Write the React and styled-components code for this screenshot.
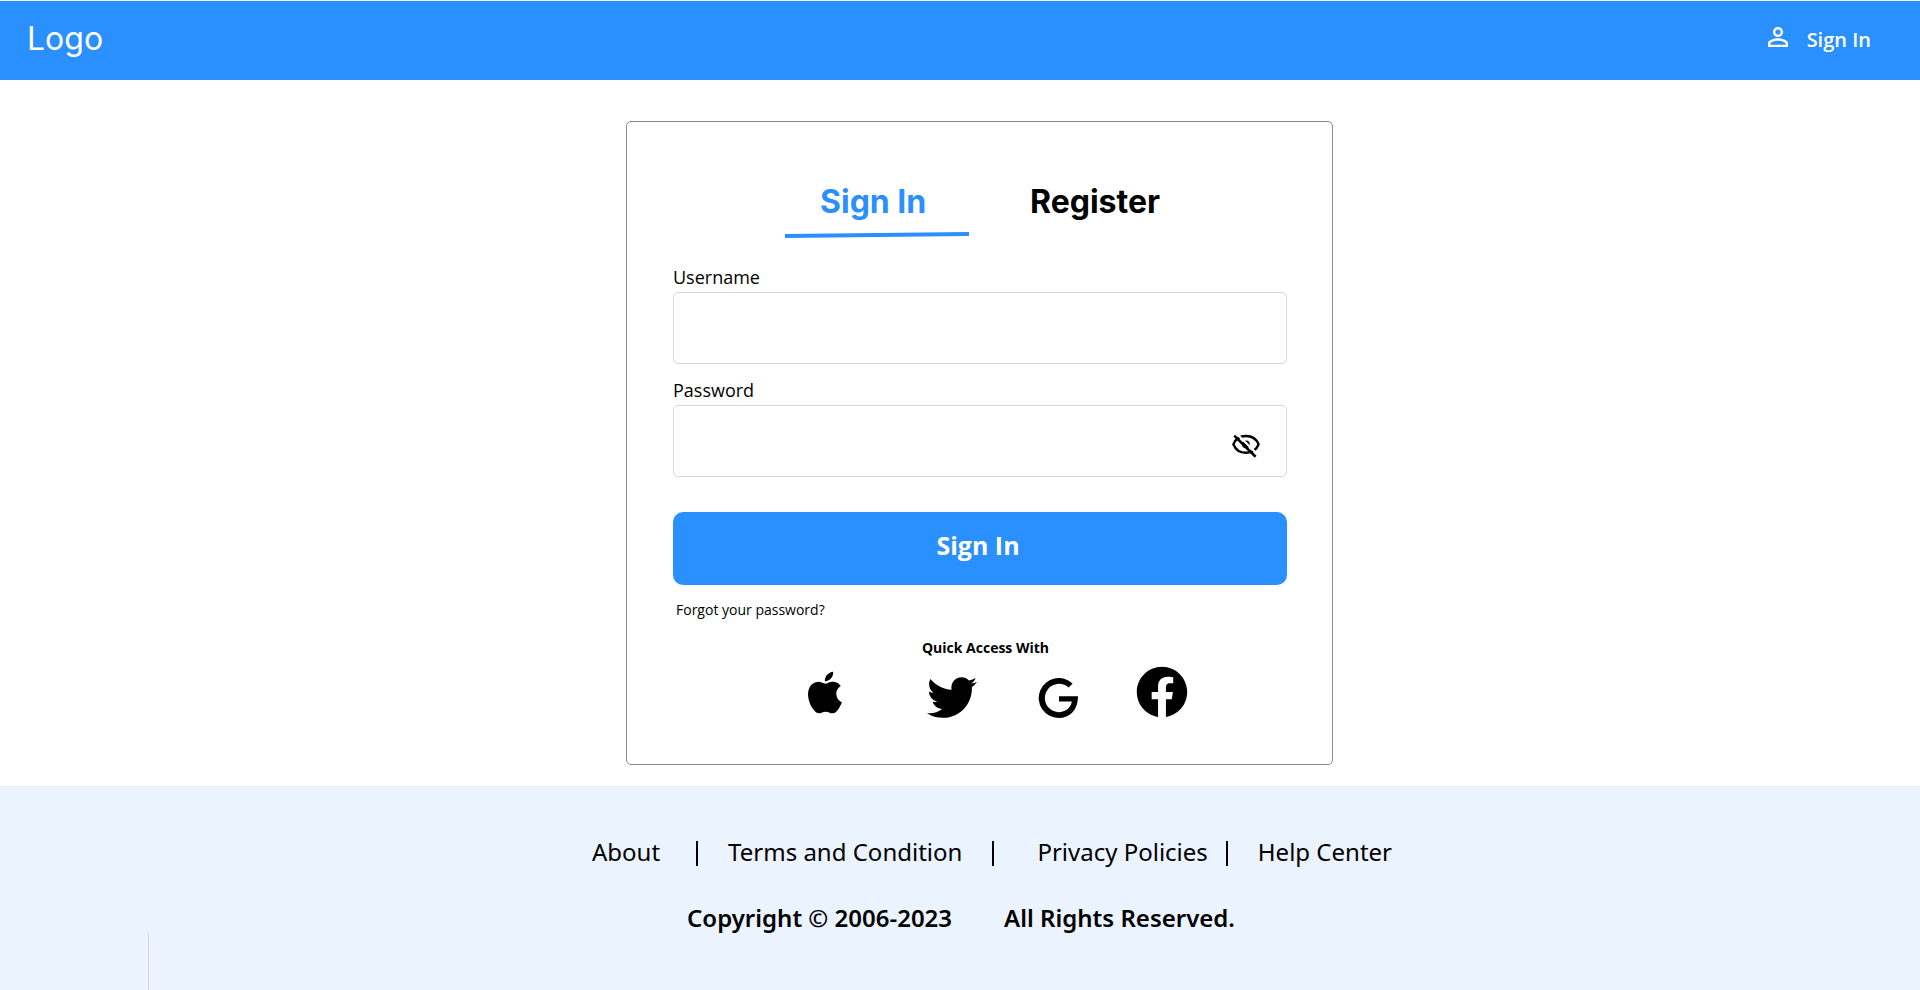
import React from "react";
import styled, { createGlobalStyle } from "styled-components";
import { MdPersonOutline } from "react-icons/md";
import { FaFacebook } from "react-icons/fa";

const blue = "#2a8fff";
const humanist = `"Open Sans", "Noto Sans", sans-serif`;
const footerFont = `"Noto Sans", "Open Sans", sans-serif`;
const grotesque = `Inter, "Liberation Sans", sans-serif`;

const GlobalStyle = createGlobalStyle`
  *, *::before, *::after { box-sizing: border-box; }
  body { margin: 0; background: #fff; color: #000; font-family: ${humanist}; }
  a { color: inherit; text-decoration: none; }
  button, input { font: inherit; color: inherit; }
  button { border: 0; background: none; padding: 0; cursor: pointer; }
  svg { display: block; flex: none; }
`;

const Page = styled.div`
  min-height: 100vh;
  display: flex;
  flex-direction: column;
`;

const Header = styled.header`
  display: flex;
  justify-content: space-between;
  align-items: flex-start;
  padding: 18px 49px 21px 27px;
  border-top: 1px solid #fff;
  background: ${blue};
  background-clip: padding-box;
  color: #fff;
`;

const Logo = styled.a`
  font: 400 32px/40px ${grotesque};
`;

const HeaderLink = styled.a`
  display: flex;
  gap: 14px;
  padding-top: 3px;
  font-size: 20px;
  line-height: 36px;
  font-weight: 600;
`;

const Main = styled.main`
  flex: 1;
  display: flex;
  justify-content: center;
  align-items: flex-start;
  padding: 41px 0 21px 39px;
`;

const Card = styled.section`
  width: 100%;
  max-width: 707px;
  padding: 60px 45px 46px 46px;
  border: 1px solid #8a8a8a;
  border-radius: 5px;
`;

const Tabs = styled.div`
  display: flex;
  align-items: flex-start;
  gap: 61px;
  padding-left: 112px;
`;

const Tab = styled.button`
  display: flex;
  flex-direction: column;
  gap: 10px;
  font: 700 32px/40px ${grotesque};
  text-align: left;
  color: ${(p) => (p.$active ? blue : "#000")};
`;

const TabLabel = styled.span`
  padding-left: ${(p) => (p.$active ? 35 : 0)}px;
`;

const Form = styled.form`
  display: flex;
  flex-direction: column;
  margin-top: 27px;
`;

const Field = styled.div`
  display: flex;
  flex-direction: column;
  gap: 3px;
  margin-bottom: 14px;
`;

const Label = styled.label`
  font-size: 18px;
  line-height: 24px;
`;

const InputBox = styled.div`
  display: flex;
  align-items: center;
  height: 72px;
  padding: 0 26px 0 16px;
  border: 1px solid #d9d9d9;
  border-radius: 5px;
`;

const Input = styled.input`
  flex: 1;
  min-width: 0;
  height: 100%;
  border: 0;
  outline: 0;
  background: transparent;
  font-size: 18px;
`;

const EyeButton = styled.button`
  padding-top: 9px;
`;

const Submit = styled.button`
  height: 73px;
  margin-top: 21px;
  padding: 0 4px 8px 0;
  border-radius: 10px;
  background: ${blue};
  color: #fff;
  font-size: 25px;
  line-height: 32px;
  font-weight: 700;
`;

const Forgot = styled.a`
  align-self: flex-start;
  margin-top: 15px;
  padding-left: 3px;
  font-size: 14px;
  line-height: 20px;
`;

const QuickTitle = styled.h2`
  margin: 18px 0 8px;
  padding-left: 11px;
  text-align: center;
  font-size: 14px;
  line-height: 20px;
  font-weight: 700;
`;

const Providers = styled.div`
  display: flex;
  align-items: flex-end;
  padding-left: 127px;
`;

const Provider = styled.button`
  margin-right: ${(p) => p.$space || 0}px;
`;

const Footer = styled.footer`
  display: flex;
  flex-direction: column;
  align-items: center;
  gap: 34px;
  position: relative;
  padding: 50px 0 56px;
  background: #ebf3ff;
  font-family: ${footerFont};
  font-size: 24px;
  line-height: 32px;

  &::after {
    content: "";
    position: absolute;
    left: 148px;
    bottom: 0;
    width: 1px;
    height: 57px;
    background: #d9d9d9;
  }
`;

const FooterNav = styled.nav`
  display: flex;
  align-items: center;
  padding-left: 64px;
`;

const Divider = styled.span`
  width: 2px;
  height: 25px;
  margin: 3px ${(p) => p.$after}px 0 ${(p) => p.$before}px;
  background: #000;
`;

const Legal = styled.p`
  display: flex;
  gap: 52px;
  margin: 0;
  padding-left: 2px;
  font-weight: 600;
`;

const AppleIcon = () => (
  <svg width="50" height="51" viewBox="0 0 24 24" aria-hidden="true">
    <path d="M18.71 19.5c-.83 1.24-1.71 2.45-3.1 2.47-1.34.03-1.77-.79-3.29-.79-1.53 0-2 .77-3.27.82-1.31.05-2.3-1.32-3.14-2.53C4.25 17 2.94 12.45 4.7 9.39c.87-1.52 2.43-2.48 4.12-2.51 1.28-.02 2.5.87 3.29.87.78 0 2.26-1.07 3.81-.91.65.03 2.47.26 3.64 1.98-.09.06-2.17 1.28-2.15 3.81.03 3.02 2.65 4.03 2.68 4.04-.03.07-.42 1.44-1.38 2.83M13 3.5c.73-.83 1.94-1.46 2.94-1.5.13 1.17-.34 2.35-1.04 3.19-.69.85-1.83 1.51-2.95 1.42-.15-1.15.41-2.35 1.05-3.11z" />
  </svg>
);

const TwitterIcon = () => (
  <svg width="50" height="41" viewBox="0 48 512 416" aria-hidden="true">
    <path d="M459.37 151.716c.325 4.548.325 9.097.325 13.645 0 138.72-105.583 298.558-298.558 298.558-59.452 0-114.68-17.219-161.137-47.106 8.447.974 16.568 1.299 25.34 1.299 49.055 0 94.213-16.568 130.274-44.832-46.132-.975-84.792-31.188-98.112-72.772 6.498.974 12.995 1.624 19.818 1.624 9.421 0 18.843-1.3 27.614-3.573-48.081-9.747-84.143-51.98-84.143-102.985v-1.299c13.969 7.797 30.214 12.67 47.431 13.319-28.264-18.843-46.781-51.005-46.781-87.391 0-19.492 5.197-37.36 14.294-52.954 51.655 63.675 129.3 105.258 216.365 109.807-1.624-7.797-2.599-15.918-2.599-24.04 0-57.828 46.782-104.934 104.934-104.934 30.213 0 57.502 12.67 76.67 33.137 23.715-4.548 46.456-13.32 66.599-25.34-7.798 24.366-24.366 44.833-46.132 57.827 21.117-2.273 41.584-8.122 60.426-16.243-14.292 20.791-32.161 39.308-52.628 54.253z" />
  </svg>
);

const GoogleIcon = () => (
  <svg width="40" height="40" viewBox="0 0 40 40" aria-hidden="true">
    <path d="M34.6 5.6A20 20 0 1 0 20.5 40C32 40 40 32 40 18.2H21V23.6H33.9C32.6 30.2 27.5 34.2 20.5 34.2A14.2 14.2 0 1 1 30.7 9.6Z" />
  </svg>
);

const EyeOffIcon = () => (
  <svg width="28" height="24" viewBox="0 0 28 24" fill="none" aria-hidden="true">
    <path
      d="M1.4 10.4C3.6 4.8 8.3 2 14 2s10.4 2.8 12.6 8.4C24.4 16 19.7 18.8 14 18.8S3.6 16 1.4 10.4Z"
      stroke="#000"
      strokeWidth="2.5"
      strokeLinejoin="round"
    />
    <circle cx="14" cy="10.4" r="3.8" fill="#000" />
    <path d="M4.4 -0.5L26 20.8" stroke="#fff" strokeWidth="2.2" />
    <path d="M2.2 1.6L23.6 22.7" stroke="#000" strokeWidth="2.6" />
  </svg>
);

const TabUnderline = () => (
  <svg width="184" height="6" viewBox="0 0 184 6" aria-hidden="true">
    <path d="M0 4L184 2" stroke={blue} strokeWidth="4" />
  </svg>
);

export default function App() {
  return (
    <Page>
      <GlobalStyle />
      <Header>
        <Logo href="#">Logo</Logo>
        <HeaderLink href="#">
          <MdPersonOutline size={30} />
          Sign In
        </HeaderLink>
      </Header>
      <Main>
        <Card>
          <Tabs role="tablist">
            <Tab type="button" role="tab" aria-selected="true" $active>
              <TabLabel $active>Sign In</TabLabel>
              <TabUnderline />
            </Tab>
            <Tab type="button" role="tab" aria-selected="false">
              <TabLabel>Register</TabLabel>
            </Tab>
          </Tabs>
          <Form onSubmit={(e) => e.preventDefault()}>
            <Field>
              <Label htmlFor="username">Username</Label>
              <InputBox>
                <Input id="username" type="text" autoComplete="username" />
              </InputBox>
            </Field>
            <Field>
              <Label htmlFor="password">Password</Label>
              <InputBox>
                <Input id="password" type="password" autoComplete="current-password" />
                <EyeButton type="button" aria-label="Show password">
                  <EyeOffIcon />
                </EyeButton>
              </InputBox>
            </Field>
            <Submit type="submit">Sign In</Submit>
            <Forgot href="#">Forgot your password?</Forgot>
          </Form>
          <QuickTitle>Quick Access With</QuickTitle>
          <Providers>
            <Provider type="button" aria-label="Apple" $space={77}><AppleIcon /></Provider>
            <Provider type="button" aria-label="Twitter" $space={61}><TwitterIcon /></Provider>
            <Provider type="button" aria-label="Google" $space={58}><GoogleIcon /></Provider>
            <Provider type="button" aria-label="Facebook"><FaFacebook size={52} /></Provider>
          </Providers>
        </Card>
      </Main>
      <Footer>
        <FooterNav>
          <a href="#">About</a>
          <Divider $before={36} $after={30} />
          <a href="#">Terms and Condition</a>
          <Divider $before={30} $after={43} />
          <a href="#">Privacy Policies</a>
          <Divider $before={18} $after={30} />
          <a href="#">Help Center</a>
        </FooterNav>
        <Legal>
          <span>Copyright © 2006-2023</span>
          <span>All Rights Reserved.</span>
        </Legal>
      </Footer>
    </Page>
  );
}
